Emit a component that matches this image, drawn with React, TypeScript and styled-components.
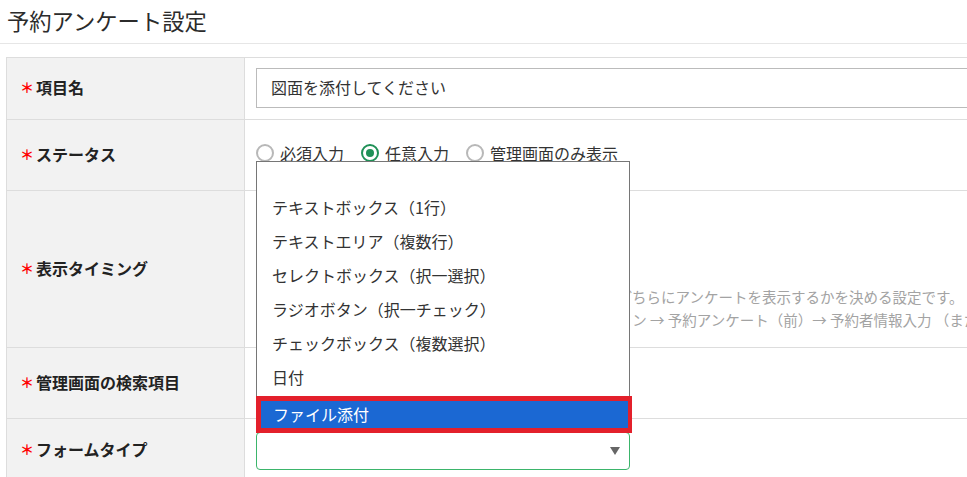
import React from "react";
import styled, { createGlobalStyle } from "styled-components";

const GlobalStyle = createGlobalStyle`
  html, body {
    margin: 0;
    overflow: hidden;
    background: #fff;
  }
  body {
    font-family: "Noto Sans CJK JP", "Noto Sans", sans-serif;
    color: #333;
  }
`;

const PageTitle = styled.h1`
  margin: 0;
  height: 44px;
  box-sizing: border-box;
  padding: 5px 0 0 7px;
  font-size: 22.3px;
  line-height: 30px;
  font-weight: normal;
  color: #2b2b2b;
  border-bottom: 1px solid #e6e6e6;
`;

const FormTable = styled.div`
  margin: 13px 0 0 6px;
  width: 1200px;
  border: 1px solid #ddd;
  border-bottom: none;
`;

const Row = styled.div`
  display: grid;
  grid-template-columns: 238px 1fr;
  border-bottom: 1px solid #ddd;
`;

const LabelCell = styled.div`
  display: flex;
  align-items: center;
  padding: 0 0 3px 13px;
  background: #f2f2f2;
  border-right: 1px solid #ddd;
  font-size: 16px;
  font-weight: bold;
  color: #222;
`;

const Required = styled.span`
  color: #f00;
  font-size: 14px;
  margin-right: 2px;
`;

const ValueCell = styled.div<{ $pt: number; $pb: number }>`
  padding: ${(p) => p.$pt}px 0 ${(p) => p.$pb}px 11px;
`;

const TextInput = styled.input`
  display: block;
  width: 900px;
  height: 40px;
  box-sizing: border-box;
  border: 1px solid #bbb;
  padding: 0 14px 3px;
  font-family: inherit;
  font-size: 16px;
  color: #333;
  outline: none;
`;

const RadioGroup = styled.div<{ $column?: boolean }>`
  display: flex;
  flex-direction: ${(p) => (p.$column ? "column" : "row")};
  gap: ${(p) => (p.$column ? "0" : "17px")};
`;

const RadioItem = styled.label`
  display: inline-flex;
  align-items: center;
  gap: 6px;
  height: 32px;
  font-size: 16px;
  color: #333;
  white-space: nowrap;
`;

const RadioMark = styled.span<{ $checked?: boolean }>`
  position: relative;
  width: 18px;
  height: 18px;
  box-sizing: border-box;
  border-radius: 50%;
  border: 2px solid ${(p) => (p.$checked ? "#1f9157" : "#b8b8b8")};
  background: #fff;
  &::after {
    content: "";
    display: ${(p) => (p.$checked ? "block" : "none")};
    position: absolute;
    inset: 3px;
    border-radius: 50%;
    background: #1f9157;
  }
`;

const HelpText = styled.div`
  margin-top: 14px;
  font-size: 14.5px;
  line-height: 23px;
  color: #a3a3a3;
  white-space: nowrap;
`;

const SelectBox = styled.div`
  position: relative;
  width: 374px;
  height: 38px;
  box-sizing: border-box;
  border: 1px solid #3bb56b;
  border-radius: 4px;
  background: #fff;
`;

const SelectArrow = styled.span`
  position: absolute;
  right: 9px;
  top: 14px;
  width: 0;
  height: 0;
  border-left: 5px solid transparent;
  border-right: 5px solid transparent;
  border-top: 8px solid #666;
`;

const OptionList = styled.div`
  position: absolute;
  left: -1px;
  bottom: 100%;
  width: 374px;
  box-sizing: border-box;
  border: 1px solid #767676;
  border-bottom: none;
  background: #fff;
  z-index: 10;
`;

const BlankOption = styled.div`
  height: 30px;
`;

const Option = styled.div<{ $selected?: boolean }>`
  box-sizing: border-box;
  height: ${(p) => (p.$selected ? 37 : 34)}px;
  line-height: ${(p) => (p.$selected ? 27 : 30)}px;
  padding-left: ${(p) => (p.$selected ? 12 : 15)}px;
  margin: ${(p) => (p.$selected ? "0 -3px 0 -1px" : "0")};
  font-size: 16px;
  color: ${(p) => (p.$selected ? "#fff" : "#333")};
  background: ${(p) => (p.$selected ? "#1b68d3" : "transparent")};
  border: ${(p) => (p.$selected ? "5px solid #e3202b" : "none")};
  border-right-width: ${(p) => (p.$selected ? "4px" : "0")};
  white-space: nowrap;
`;

const formTypes = [
  "テキストボックス（1行）",
  "テキストエリア（複数行）",
  "セレクトボックス（択一選択）",
  "ラジオボタン（択一チェック）",
  "チェックボックス（複数選択）",
  "日付",
];

function Label({ children }: { children: React.ReactNode }) {
  return (
    <LabelCell>
      <Required>＊</Required>
      {children}
    </LabelCell>
  );
}

function Radio({ label, checked }: { label: string; checked?: boolean }) {
  return (
    <RadioItem>
      <RadioMark $checked={checked} />
      {label}
    </RadioItem>
  );
}

export default function App() {
  return (
    <>
      <GlobalStyle />
      <PageTitle>予約アンケート設定</PageTitle>
      <FormTable>
        <Row>
          <Label>項目名</Label>
          <ValueCell $pt={10} $pb={11}>
            <TextInput readOnly value="図面を添付してください" />
          </ValueCell>
        </Row>
        <Row>
          <Label>ステータス</Label>
          <ValueCell $pt={17} $pb={21}>
            <RadioGroup>
              <Radio label="必須入力" />
              <Radio label="任意入力" checked />
              <Radio label="管理画面のみ表示" />
            </RadioGroup>
          </ValueCell>
        </Row>
        <Row>
          <Label>表示タイミング</Label>
          <ValueCell $pt={16} $pb={16}>
            <RadioGroup $column>
              <Radio label="予約者情報入力の前に表示" checked />
              <Radio label="予約者情報入力の後に表示" />
            </RadioGroup>
            <HelpText>
              予約フォームの流れの中で、予約者情報入力の前と後のどちらにアンケートを表示するかを決める設定です。
              <br />
              ※予約の流れ（例）：日時選択→メニュー選択 → オプション → 予約アンケート（前）→ 予約者情報入力 （または 予約アンケート（後））
            </HelpText>
          </ValueCell>
        </Row>
        <Row>
          <Label>管理画面の検索項目</Label>
          <ValueCell $pt={14} $pb={24}>
            <RadioGroup>
              <Radio label="表示する" />
              <Radio label="表示しない" />
            </RadioGroup>
          </ValueCell>
        </Row>
        <Row>
          <Label>フォームタイプ</Label>
          <ValueCell $pt={13} $pb={12}>
            <SelectBox>
              <OptionList>
                <BlankOption />
                {formTypes.map((t) => (
                  <Option key={t}>{t}</Option>
                ))}
                <Option $selected>ファイル添付</Option>
              </OptionList>
              <SelectArrow />
            </SelectBox>
          </ValueCell>
        </Row>
      </FormTable>
    </>
  );
}
